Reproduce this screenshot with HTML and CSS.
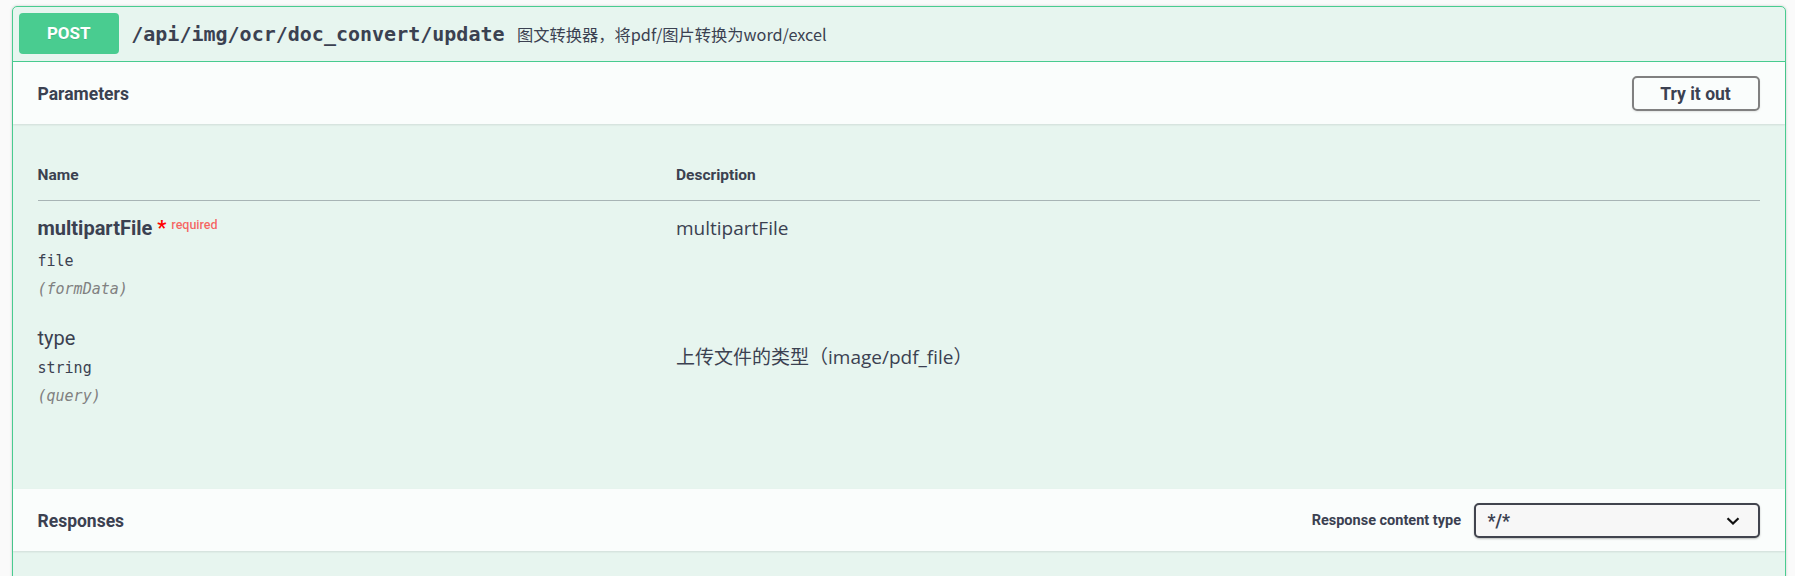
FILE: index.html
```html
<!DOCTYPE html>
<html lang="zh">
<head>
<meta charset="utf-8">
<title>Swagger operation</title>
<link rel="stylesheet" href="styles.css">
</head>
<body>
<div class="opblock">
  <div class="summary">
    <span class="method">POST</span>
    <span class="path">/api/img/ocr/doc_convert/update</span>
    <div class="summary-desc">图文转换器，将pdf/图片转换为word/excel</div>
  </div>
  <div class="section-header">
    <h4 class="title">Parameters</h4>
    <button class="btn">Try it out</button>
  </div>
  <div class="table-container">
    <table class="params">
      <thead>
        <tr><th class="col-name">Name</th><th class="col-desc">Description</th></tr>
      </thead>
      <tbody>
        <tr>
          <td class="col-name">
            <div class="param-name required">multipartFile<span class="star">&nbsp;*</span><span class="req">required</span></div>
            <div class="param-type">file</div>
            <div class="param-in">(formData)</div>
          </td>
          <td class="col-desc"><div class="desc">multipartFile</div></td>
        </tr>
        <tr>
          <td class="col-name">
            <div class="param-name">type</div>
            <div class="param-type">string</div>
            <div class="param-in">(query)</div>
          </td>
          <td class="col-desc"><div class="desc"><p class="desc-p">上传文件的类型（image/pdf_file）</p></div></td>
        </tr>
      </tbody>
    </table>
  </div>
  <div class="section-header">
    <h4 class="title">Responses</h4>
    <div class="media">
      <span class="media-label">Response content type</span>
      <div class="select">
        <span class="select-value">*/*</span>
        <svg class="chev" width="14" height="8" viewBox="0 0 14 8"><path d="M1.5 1.2 L7 6.5 L12.5 1.2" fill="none" stroke="#111" stroke-width="2.2"/></svg>
      </div>
    </div>
  </div>
  <div class="responses-body"></div>
</div>
</body>
</html>
```
FILE: styles.css
```css
html { overflow: hidden; }
body {
  margin: 0;
  padding: 6px 9.5px 0 11.5px;
  background: #fafafa;
  color: #3b4151;
  font-family: Roboto, "Noto Sans", sans-serif;
}
.opblock {
  border: 1px solid #49cc90;
  border-radius: 5px;
  background: rgba(73, 204, 144, 0.1);
  box-shadow: 0 0 3px rgba(0, 0, 0, 0.19);
}
.summary {
  display: flex;
  align-items: center;
  padding: 6.25px;
  border-bottom: 1px solid #49cc90;
}
.method {
  box-sizing: border-box;
  min-width: 100px;
  height: 41px;
  padding: 0 15px;
  text-align: center;
  font: 700 17px/41px Roboto, sans-serif;
  color: #fff;
  background: #49cc90;
  border-radius: 4px;
  text-shadow: 0 1px 0 rgba(0, 0, 0, 0.1);
}
.path {
  padding: 0 12.5px;
  font: 700 20px "DejaVu Sans Mono", monospace;
  color: #3b4151;
}
.summary-desc {
  font-size: 16.25px;
  font-family: "Noto Sans CJK SC", sans-serif;
  color: #3b4151;
}
.section-header {
  box-sizing: border-box;
  display: flex;
  align-items: center;
  justify-content: space-between;
  min-height: 62.5px;
  padding: 11px 25px 9px;
  background: rgba(255, 255, 255, 0.8);
  box-shadow: 0 1px 2px rgba(0, 0, 0, 0.1);
}
.title {
  margin: 0;
  font: 700 17.5px Roboto, sans-serif;
  color: #3b4151;
}
.btn {
  box-sizing: border-box;
  width: 128px;
  height: 35px;
  padding: 0;
  font: 700 17.5px Roboto, sans-serif;
  color: #3b4151;
  background: transparent;
  border: 2.5px solid #808080;
  border-radius: 5px;
  box-shadow: 0 1px 2px rgba(0, 0, 0, 0.1);
}
.table-container {
  padding: 25px 25px 70.5px;
}
.params {
  width: 100%;
  border-collapse: collapse;
  table-layout: fixed;
}
.params th {
  text-align: left;
  padding: 16px 0 14px;
  font: 700 15.5px/21px Roboto, sans-serif;
  color: #3b4151;
  border-bottom: 1px solid rgba(59, 65, 81, 0.2);
}
.params th.col-name { width: 638.5px; }
.params td {
  padding: 12.5px 0;
  vertical-align: top;
}
.param-name {
  font: 400 20px/28px Roboto, sans-serif;
  color: #3b4151;
}
.param-name.required { font-weight: 700; }
.star { color: red; }
.req {
  position: relative;
  top: -6px;
  padding: 5px;
  font-size: 12.5px;
  font-weight: 500;
  color: rgba(255, 0, 0, 0.6);
}
.param-type {
  padding: 6px 0 8px;
  font: 400 15px/20px "DejaVu Sans Mono", monospace;
  color: #3b4151;
}
.param-in {
  font: italic 400 15px/20px "DejaVu Sans Mono", monospace;
  color: #808080;
}
.desc {
  font: 400 19px/28px "Open Sans", "Noto Sans CJK SC", sans-serif;
  color: #3b4151;
}
.desc-p { margin: 19.5px 0 0; }
.media {
  display: flex;
  align-items: center;
  gap: 12.5px;
}
.media-label {
  font: 700 14.5px Roboto, sans-serif;
  color: #3b4151;
}
.select {
  box-sizing: border-box;
  width: 286px;
  height: 35px;
  display: flex;
  align-items: center;
  justify-content: space-between;
  padding: 0 18px 0 12px;
  border: 2px solid #41444e;
  border-radius: 5px;
  background: #f7f7f7;
  box-shadow: 0 1px 2px rgba(0, 0, 0, 0.25);
  font: 700 17.5px Roboto, sans-serif;
  color: #3b4151;
}
.chev { display: block; }
.responses-body {
  height: 60px;
}
```
